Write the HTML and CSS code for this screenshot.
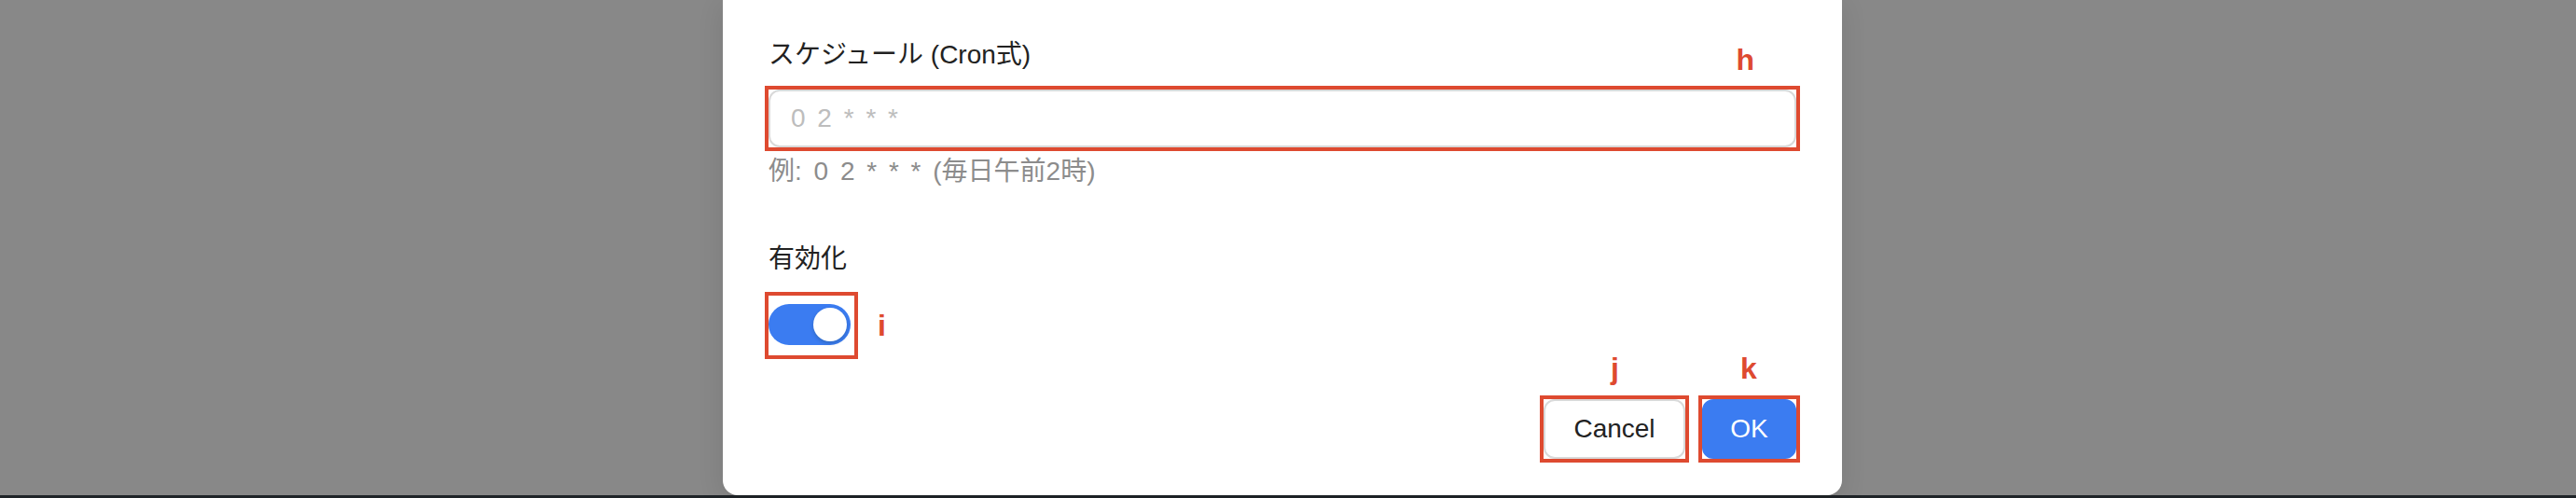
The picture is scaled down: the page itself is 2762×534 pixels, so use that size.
FILE: index.html
```html
<!DOCTYPE html>
<html lang="ja">
<head>
<meta charset="utf-8">
<title>スケジュール設定</title>
<link rel="stylesheet" href="styles.css">
</head>
<body>
<div class="backdrop">
  <div class="modal">
    <div class="field">
      <label class="label" for="cron">スケジュール (Cron式)</label>
      <div class="annot-wrap">
        <input id="cron" class="input" type="text" placeholder="0 2 * * *">
        <span class="tag tag-h">h</span>
      </div>
      <div class="hint">例: 0 2 * * * (毎日午前2時)</div>
    </div>
    <div class="field field-switch">
      <div class="label">有効化</div>
      <div class="switch-row">
        <div class="switch-box">
          <span class="switch"><span class="knob"></span></span>
        </div>
        <span class="tag tag-i">i</span>
      </div>
    </div>
    <div class="footer">
      <div class="btn-wrap">
        <span class="tag tag-j">j</span>
        <button class="btn btn-default" type="button">Cancel</button>
      </div>
      <div class="btn-wrap">
        <span class="tag tag-k">k</span>
        <button class="btn btn-primary" type="button">OK</button>
      </div>
    </div>
  </div>
  <div class="taskbar"></div>
</div>
</body>
</html>
```

FILE: styles.css
```css
html, body {
  margin: 0;
  padding: 0;
  background: #888888;
  overflow: hidden;
}

.backdrop {
  width: 2762px;
  height: 534px;
  background: #888888;
  display: flex;
  flex-direction: column;
  font-family: "Liberation Sans", "Noto Sans CJK JP", sans-serif;
  color: #222222;
}

.modal {
  position: relative;
  box-sizing: border-box;
  width: 1200px;
  height: 531px;
  margin-left: 775px;
  padding: 37px 49px 0 49px;
  background: #ffffff;
  border-radius: 0 0 16px 16px;
  box-shadow: 0 6px 28px rgba(0, 0, 0, 0.10);
  display: flex;
  flex-direction: column;
}

.taskbar {
  height: 3px;
  background: #1f2428;
}

.field {
  display: flex;
  flex-direction: column;
}

.label {
  font-size: 28px;
  line-height: 44px;
  color: #222222;
  margin-bottom: 15px;
}

.annot-wrap {
  position: relative;
  outline: 4px solid #de4a30;
  outline-offset: 0;
}

.input {
  display: block;
  box-sizing: border-box;
  width: 100%;
  height: 62px;
  padding: 0 22px;
  border: 2px solid #d9d9d9;
  border-radius: 12px;
  background: #ffffff;
  font-family: "Liberation Sans", "Noto Sans CJK JP", sans-serif;
  font-size: 28px;
  word-spacing: 5px;
  color: #222222;
  outline: none;
}

.input::placeholder {
  color: #bdbdbd;
}

.hint {
  margin-top: 8px;
  font-size: 28px;
  line-height: 36px;
  word-spacing: 5px;
  color: #8c8c8c;
}

.field-switch {
  margin-top: 54px;
}

.field-switch .label {
  margin-bottom: 17px;
}

.switch-row {
  position: relative;
  display: flex;
  align-items: center;
}

.switch-box {
  box-sizing: border-box;
  width: 92px;
  height: 64px;
  padding-top: 9px;
  outline: 4px solid #de4a30;
}

.switch {
  position: relative;
  display: block;
  width: 88px;
  height: 44px;
  border-radius: 22px;
  background: #3b7cf1;
}

.knob {
  position: absolute;
  top: 4px;
  right: 4px;
  width: 36px;
  height: 36px;
  border-radius: 50%;
  background: #ffffff;
  box-shadow: 0 2px 4px rgba(0, 35, 11, 0.2);
}

.footer {
  display: flex;
  justify-content: flex-end;
  gap: 18px;
  margin-top: 47px;
}

.btn-wrap {
  position: relative;
  outline: 4px solid #de4a30;
  outline-offset: 0;
}

.btn {
  display: block;
  box-sizing: border-box;
  height: 64px;
  border-radius: 12px;
  font-family: "Liberation Sans", "Noto Sans CJK JP", sans-serif;
  font-size: 28px;
  line-height: 1;
  cursor: pointer;
  outline: none;
}

.btn-default {
  width: 152px;
  background: #ffffff;
  border: 2px solid #d9d9d9;
  color: #222222;
}

.btn-primary {
  width: 101px;
  background: #3b7cf1;
  border: 2px solid #3b7cf1;
  color: #ffffff;
}

.tag {
  position: absolute;
  font-family: "Liberation Sans", sans-serif;
  font-weight: bold;
  font-size: 32px;
  line-height: 32px;
  color: #de4a30;
}

.tag-h {
  right: 45px;
  top: -48px;
}

.tag-i {
  left: 117px;
  top: 16px;
}

.tag-j {
  left: 72px;
  top: -49px;
}

.tag-k {
  left: 41px;
  top: -49px;
}
```
